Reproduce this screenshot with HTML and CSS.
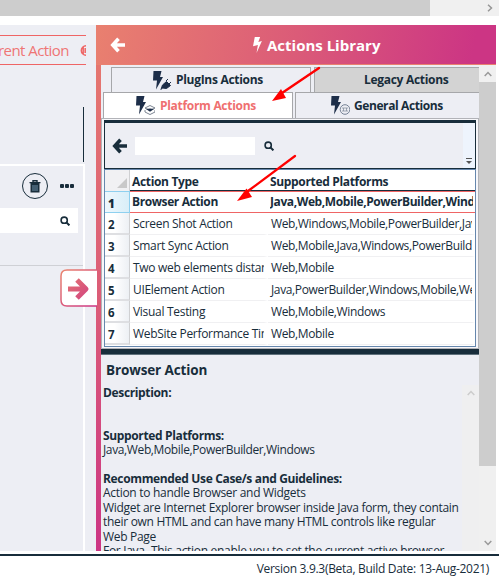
FILE: index.html
```html
<!DOCTYPE html>
<html lang="en">
<head>
<meta charset="utf-8">
<title>Actions Library</title>
<link rel="stylesheet" href="styles.css">
</head>
<body>
<svg class="defs" width="0" height="0">
  <defs>
    <linearGradient id="warm" gradientUnits="userSpaceOnUse" x1="4" y1="2" x2="36" y2="36"><stop offset="0" stop-color="#e9806f"/><stop offset="1" stop-color="#cc3584"/></linearGradient>
    <symbol id="arrow" viewBox="0 0 16 16"><path d="M8.500 1.800 2.800 8l5.700 6.200M3 8h12" fill="none" stroke="currentColor" stroke-width="3.600"/></symbol>
    <symbol id="bolt" viewBox="0 0 11 18"><path d="M3 0h6L7 5.500l4-1L5 18l1.500-9L1 10.500z" fill="currentColor"/></symbol>
    <symbol id="search" viewBox="0 0 10 10"><circle cx="4.200" cy="4.200" r="3.100" fill="none" stroke="currentColor" stroke-width="1.600"/><path d="m6.400 6.400 3 3" stroke="currentColor" stroke-width="2"/></symbol>
    <symbol id="chevron" viewBox="0 0 8 6"><path d="m.7 5 3.300-3.500L7.300 5" fill="none" stroke="currentColor" stroke-width="1.500"/></symbol>
  </defs>
</svg>
<div class="hscroll"><div class="hthumb"></div><svg class="hnext"><use href="#chevron"/></svg></div>
<main class="main">
  <section class="left">
    <div class="current"><span class="current-t">rent Action</span><svg class="target" viewBox="0 0 6 11"><path d="M6 .8A4.700 4.700 0 0 0 6 10.200M5.200 3v5M3.200 2v7" fill="none" stroke="#ef6565" stroke-width="1.500"/></svg></div>
    <div class="rule"></div>
    <div class="box">
      <div class="tools">
        <span class="circle"><svg width="12" height="13" viewBox="0 0 12 13"><path d="M4 2V.7h4V2M.5 2.600h11" fill="none" stroke="#182d3b" stroke-width="1.400"/><path d="M1.500 3h9v9.500h-9z" fill="#182d3b"/><path d="M4 5v6M6 5v6M8 5v6" stroke="#87a8c4" stroke-width=".8"/></svg></span>
        <span class="dots"><i></i><i></i><i></i></span>
      </div>
      <div class="find"><svg width="10" height="10"><use href="#search"/></svg></div>
    </div>
  </section>
  <section class="panel">
    <header class="head">
      <svg class="back" width="16" height="16"><use href="#arrow"/></svg>
      <svg class="hbolt" width="10" height="16"><use href="#bolt"/></svg>
      <h1>Actions Library</h1>
    </header>
    <div class="body">
      <div class="content">
        <div class="tabs1">
          <div class="tab t1"><svg class="ico" viewBox="0 0 20 19"><path d="M1.500 0h8L8 6h3L4 18.500 5 9.500H1z"/><path d="m9 18.500 1.500-4.500 4-3.500 4 4-4 3-4-.5zM14 10l2-2M17 13l2-2" stroke="#1d2e49" stroke-width="1"/></svg><span>PlugIns Actions</span></div>
          <div class="tab t2"><span>Legacy Actions</span></div>
        </div>
        <div class="tabs2">
          <div class="tab t3"><svg class="ico" viewBox="0 0 20 19"><path d="M1.500 0h8L8 6h3L4 18.500 5 9.500H1z"/><path d="m10 12 5-2.500L20 12l-5 2.500zM10 14v2l5 2.500 5-2.500v-2" fill="none" stroke="#6d7685" stroke-width=".9"/><path d="m11 13 4-.5 4 .5-4 2.800z"/></svg><span>Platform Actions</span></div>
          <div class="tab t4"><svg class="ico" viewBox="0 0 20 19"><path d="M1.500 0h8L8 6h3L4 18.500 5 9.500H1z"/><circle cx="15" cy="13.500" r="4.800" fill="#edeef4" stroke="#68758a" stroke-width=".9"/><path d="M12 12h6M12 15h6M13.500 12v3M16.500 12v3" stroke="#7c8797" stroke-width=".7"/></svg><span>General Actions</span></div>
        </div>
        <div class="page">
          <div class="bar">
            <svg class="barback" width="16" height="16"><use href="#arrow"/></svg>
            <div class="input"></div>
            <svg class="barfind" width="10" height="10"><use href="#search"/></svg>
            <div class="grip"><svg width="6" height="6" viewBox="0 0 6 6"><path d="M0 .5h6" stroke="#555"/><path d="M0 3h6L3 6z" fill="#555"/></svg></div>
          </div>
          <div class="grid">
            <div class="row hd"><b class="n"><svg width="10" height="10"><path d="M10 0v10H0z" fill="#c9c9c9"/></svg></b><div class="a">Action Type</div><div class="p">Supported Platforms</div></div>
            <div class="row sel"><b class="n">1</b><div class="a">Browser Action</div><div class="p"><span class="clip">Java,Web,Mobile,PowerBuilder,Windows</span></div></div>
            <div class="row"><b class="n">2</b><div class="a">Screen Shot Action</div><div class="p">Web,Windows,Mobile,PowerBuilder,Java</div></div>
            <div class="row"><b class="n">3</b><div class="a">Smart Sync Action</div><div class="p">Web,Mobile,Java,Windows,PowerBuilder</div></div>
            <div class="row"><b class="n">4</b><div class="a">Two web elements distance</div><div class="p">Web,Mobile</div></div>
            <div class="row"><b class="n">5</b><div class="a">UIElement Action</div><div class="p">Java,PowerBuilder,Windows,Mobile,Web</div></div>
            <div class="row"><b class="n">6</b><div class="a">Visual Testing</div><div class="p">Web,Mobile,Windows</div></div>
            <div class="row"><b class="n">7</b><div class="a">WebSite Performance Timing</div><div class="p">Web,Mobile</div></div>
          </div>
        </div>
        <div class="split"></div>
        <div class="desc">
          <div class="words">
            <h2>Browser Action</h2>
            <p class="b d1">Description:</p>
            <p class="b">Supported Platforms:</p>
            <p class="list">Java,Web,Mobile,PowerBuilder,Windows</p>
            <p class="b d3">Recommended Use Case/s and Guidelines:</p>
            <p>Action to handle Browser and Widgets</p>
            <p>Widget are Internet Explorer browser inside Java form, they contain</p>
            <p>their own HTML and can have many HTML controls like regular</p>
            <p>Web Page</p>
            <p>For Java- This action enable you to set the current active browser</p>
          </div>
          <div class="inner"><svg width="8" height="6"><use href="#chevron"/></svg></div>
        </div>
      </div>
      <div class="vscroll"><svg class="up" width="8" height="6"><use href="#chevron"/></svg><div class="vthumb"></div><svg class="down" width="8" height="6"><use href="#chevron"/></svg></div>
    </div>
  </section>
  <div class="handle"><svg width="38" height="38" viewBox="0 0 38 38"><path d="M37 1H7Q1 1 1 7v24q0 6 6 6h30" fill="#fff" stroke="url(#warm)" stroke-width="1.500"/><path d="m17 11 9 9-9 9M8 20h16" fill="none" stroke="url(#warm)" stroke-width="5" stroke-linejoin="round"/></svg></div>
</main>
<footer class="foot">Version 3.9.3(Beta, Build Date: 13-Aug-2021)</footer>
<svg class="notes" width="499" height="578" viewBox="0 0 499 578"><g stroke="red" fill="red" stroke-linecap="round"><path d="M319 68 282 93" stroke-width="2.400"/><path d="m272 101 9-12 5 9z" stroke="none"/><path d="M295 156 248 191" stroke-width="2.200"/><path d="m237 201 9.500-12.500 5.500 8.500z" stroke="none"/></g></svg>
</body>
</html>
```
FILE: styles.css
```css
* { box-sizing: border-box; }
body { margin: 0; width: 499px; height: 578px; overflow: hidden; background: #fff; color: #182d3b; font: 12px/14.4px "Open Sans", "Noto Sans", sans-serif; letter-spacing: -.3px; white-space: nowrap; }
h1, h2, p { margin: 0; }
svg { display: block; flex: none; }
.defs { position: absolute; }
.hscroll { height: 16px; background: #f0f0f0; display: flex; align-items: center; justify-content: space-between; padding-right: 5px; color: #969696; }
.hthumb { width: 430px; height: 16px; background: #cdcdcd; }
.hnext { width: 8px; height: 6px; transform: rotate(90deg); }
.main { display: flex; margin-top: 9px; height: 526px; position: relative; }
.left { width: 96px; background: #edeef4; overflow: hidden; }
.current { margin-top: 10px; width: 86px; height: 30px; border-top: 1px solid #ef6565; border-bottom: 1px solid #ef6565; color: #ef7575; display: flex; align-items: center; font-size: 15px; overflow: hidden; }
.current-t { width: 80px; flex: none; letter-spacing: -.55px; margin-left: -2px; }
.target { width: 6px; height: 11px; margin-left: 2px; }
.rule { width: 84px; height: 55px; margin-top: 42px; border-right: 1px solid #182d3b; }
.box { margin-top: 2px; width: 85px; height: 400px; border-top: 2px solid #fff; border-right: 2px solid #fff; }
.tools { display: flex; align-items: center; height: 42px; padding: 0 0 2px 22px; }
.circle { width: 26px; height: 26px; border: 1px solid #182d3b; border-radius: 50%; display: grid; place-items: center; }
.dots { display: flex; gap: 1px; margin-left: 12px; }
.dots i { width: 4px; height: 4px; border-radius: 1px; background: #182d3b; }
.find { width: 78px; height: 25px; background: #fff; display: flex; align-items: center; justify-content: flex-end; padding-right: 8px; }
.box::after { content: ""; display: block; margin-top: 32px; height: 1px; background: #cfd0d5; }
.panel { width: 400px; display: flex; flex-direction: column; }
.head { height: 40px; border-bottom: 1px solid #e9806f; background: linear-gradient(100deg, #e9806f, #db5b78 50%, #cc3584 94%); color: #fff; display: flex; align-items: center; }
.back { margin-left: 14px; }
.hbolt { margin-left: 126px; }
h1 { font-size: 15px; line-height: 20px; margin-left: 5px; letter-spacing: 0; }
.body { flex: 1; min-height: 0; display: flex; padding-left: 5px; background: linear-gradient(#e5766f, #db5b78 50%, #cc3584); }
.content { width: 378px; background: #edeef4; display: flex; flex-direction: column; overflow: hidden; }
.tabs1 { height: 27px; padding: 2px 0 0 10px; display: flex; gap: 3px; }
.tabs2 { height: 26px; padding-left: 2px; display: flex; gap: 2px; }
.tab { border: 1px solid #a6a7aa; border-bottom: 0; display: flex; align-items: center; font-weight: 700; }
.tab span { padding-top: 1px; }
.t1 { width: 200px; padding-left: 40px; }
.t2 { width: 165px; background: #d3d3d3; border-right: 0; padding-left: 49px; }
.t3 { width: 191px; background: #fff; color: #ef7070; padding-left: 31px; }
.t3 .ico { margin-right: 5px; }
.t4 { width: 185px; border-right: 0; padding-left: 34px; letter-spacing: -.4px; }
.ico { width: 20px; height: 19px; fill: #1d2e49; margin-right: 4px; }
.page { height: 231px; border: 1px solid #b2b3b8; padding: 1px 2px 0; background: #f7f7fa; }
.bar { height: 49px; width: 372px; border: 1px solid #182d3b; border-top-width: 3px; background: #edeef4; display: flex; align-items: center; }
.barback { margin-left: 7px; }
.input { margin-left: 7px; width: 120px; height: 18px; background: #fff; }
.barfind { margin-left: 9px; }
.grip { margin-left: auto; width: 12px; align-self: stretch; background: #eef4fd; display: flex; align-items: flex-end; justify-content: center; padding-bottom: 4px; }
.grid { width: 372px; height: 178px; border: 1px solid #6687ad; background: #fff; }
.row { display: grid; grid-template-columns: 25px 138px 207px; grid-template-rows: 100%; height: 22px; line-height: 22px; }
.n { border-right: 1px solid #cfd0d2; border-bottom: 2px solid #dedfe2; background: linear-gradient(90deg, #fff 40%, #edf0f4); padding: 3px 0 0 3px; line-height: 17px; font-size: 11.5px; }
.a, .p { overflow: hidden; border-bottom: 1px solid #f0f0f2; }
.a { padding-left: 3px; border-right: 4px solid #fff; }
.p { padding-left: 3px; border-right: 3px solid #fff; letter-spacing: -.36px; }
.hd { font-weight: 700; height: 21px; line-height: 23px; }
.hd .n { background: #f1f1f3; border-bottom: 0; display: flex; justify-content: flex-end; align-items: flex-end; padding: 0 2px 3px 0; }
.hd .a, .hd .p, .sel .a, .sel .p { border-right: 0; }
.hd .a, .hd .p { border-bottom: 1px solid #182d3b; padding-left: 2px; letter-spacing: -.33px; }
.sel { font-weight: 700; }
.sel .a, .sel .p { border-top: 1px solid #ef6565; border-bottom: 1px solid #ef6565; line-height: 19px; padding-left: 2px; letter-spacing: -.4px; }
.sel .n { border: 1px solid #8ed0ef; border-left: 0; background: linear-gradient(90deg, #eef8fd, #d9eef8); }
.clip { display: block; width: 203px; overflow: hidden; }
.split { height: 6px; background: #182d3b; border-bottom: 1px solid #60717c; }
.desc { flex: 1; min-height: 0; display: flex; }
.words { width: 361px; padding-left: 2px; overflow: hidden; }
.words p { height: 14.5px; line-height: 14.5px; }
h2 { font-size: 13.5px; line-height: 18px; margin: 6px 0 7px 3px; letter-spacing: -.12px; }
.words .d1 { margin-bottom: 28px; }
.words .d3 { margin-top: 14px; }
.b { font-weight: 700; letter-spacing: -.35px; }
.list { letter-spacing: -.37px; }
.inner { width: 17px; margin-top: 30px; background: #efeff0; display: flex; justify-content: center; padding-top: 5px; color: #ccc; }
.vscroll { width: 17px; background: #f0f0f0; display: flex; flex-direction: column; align-items: center; color: #999; }
.up { margin-top: 6px; }
.vthumb { margin-top: 5px; width: 17px; height: 384px; background: #cdcdcd; }
.down { margin-top: 74px; transform: rotate(180deg); }
.handle { position: absolute; left: 60px; top: 244px; }
.foot { margin-top: 3px; height: 24px; border-top: 2px solid #182d3b; text-align: right; padding-right: 10px; line-height: 25px; }
.notes { position: absolute; left: 0; top: 0; }
```
